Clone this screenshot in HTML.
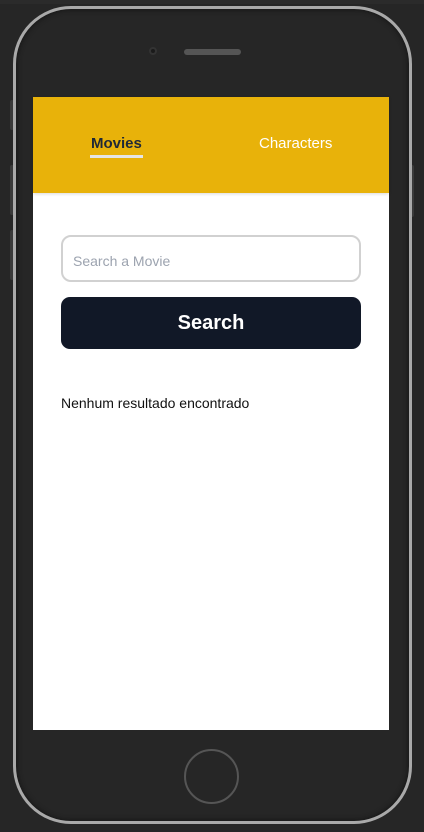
<!DOCTYPE html>
<html><head><style>
*{margin:0;padding:0;box-sizing:border-box}
body{width:424px;height:832px;background:#262626;position:relative;overflow:hidden;font-family:"Liberation Sans",sans-serif}
.top{position:absolute;left:0;top:0;width:424px;height:4px;background:#2b2b2b}
.phone{position:absolute;left:13px;top:6px;width:399px;height:818px;border:3px solid #a9a9a9;border-radius:58px;background:#262626;box-shadow:inset 0 0 6px #111}
.inner{position:absolute;left:18px;top:12px;width:388px;height:806px;border-radius:50px;border:1px solid #303030}
.btnside{position:absolute;width:4px;background:#3a3a3a;border-radius:2px}
.cam{position:absolute;left:149px;top:47px;width:8px;height:8px;border-radius:50%;background:#1a1a1a;border:2px solid #333}
.spk{position:absolute;left:184px;top:49px;width:57px;height:6px;border-radius:3px;background:#555}
.screen{position:absolute;left:33px;top:97px;width:356px;height:633px;background:#fff}
.nav{height:96px;background:#e8b20a;position:relative;box-shadow:0 1px 3px rgba(0,0,0,.15)}
.t1{position:absolute;left:58px;top:38px;font-size:15px;font-weight:bold;color:#1f2937}
.ul{position:absolute;left:57px;top:58px;width:53px;height:3px;background:#e5e5e5}
.t2{position:absolute;left:226px;top:38px;font-size:15px;color:#fff}
.inp{position:absolute;left:28px;top:138px;width:300px;height:47px;border:2px solid #d1d1d1;border-radius:10px;font-size:14px;color:#9ca3af;padding:16px 0 0 10px}
.sb{position:absolute;left:28px;top:200px;width:300px;height:52px;background:#111827;border-radius:9px;color:#fff;font-size:20px;font-weight:bold;text-align:center;line-height:52px}
.msg{position:absolute;left:28px;top:298px;font-size:14px;color:#111}
.home{position:absolute;left:184px;top:749px;width:55px;height:55px;border-radius:50%;border:2px solid #555}
</style></head><body>
<div class="top"></div>
<div class="btnside" style="left:10px;top:100px;height:30px"></div>
<div class="btnside" style="left:10px;top:165px;height:50px"></div>
<div class="btnside" style="left:10px;top:230px;height:50px"></div>
<div class="btnside" style="left:410px;top:165px;height:52px"></div>
<div class="phone"></div>
<div class="cam"></div><div class="spk"></div>
<div class="screen">
<div class="nav"><div class="t1">Movies</div><div class="ul"></div><div class="t2">Characters</div></div>
<div class="inp">Search a Movie</div>
<div class="sb">Search</div>
<div class="msg">Nenhum resultado encontrado</div>
</div>
<div class="home"></div>
</body></html>
